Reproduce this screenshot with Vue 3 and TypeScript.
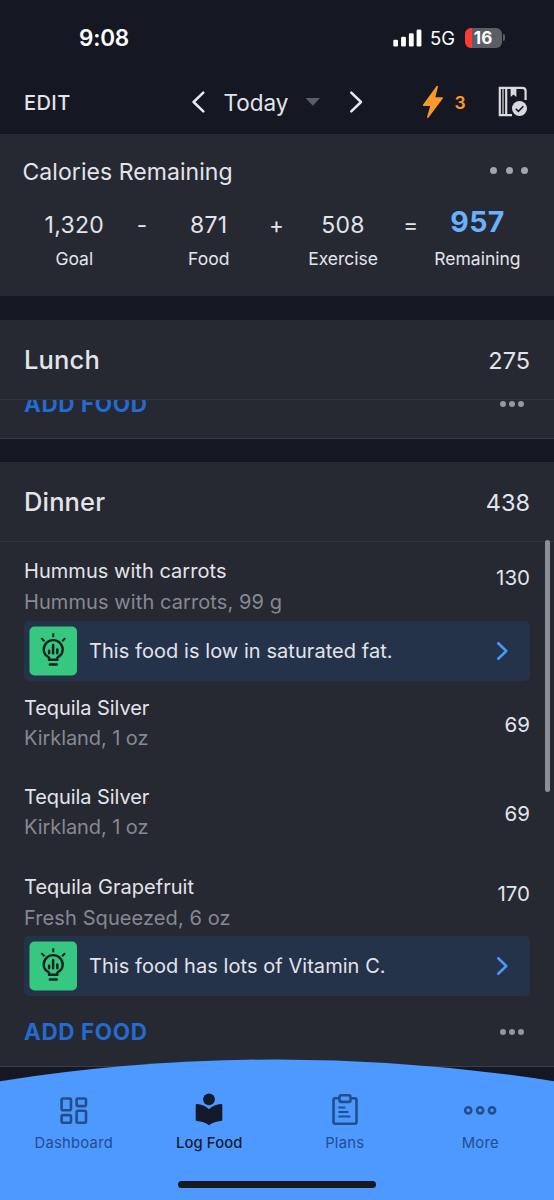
<script setup lang="ts">
interface Food {
  name: string
  detail: string
  calories: number
  tip?: string
}

interface Term {
  value: string
  label: string
  operator?: string
  total?: boolean
}

const terms: Term[] = [
  { value: '1,320', label: 'Goal', operator: '-' },
  { value: '871', label: 'Food', operator: '+' },
  { value: '508', label: 'Exercise', operator: '=' },
  { value: '957', label: 'Remaining', total: true },
]

const foods: Food[] = [
  {
    name: 'Hummus with carrots',
    detail: 'Hummus with carrots, 99 g',
    calories: 130,
    tip: 'This food is low in saturated fat.',
  },
  { name: 'Tequila Silver', detail: 'Kirkland, 1 oz', calories: 69 },
  { name: 'Tequila Silver', detail: 'Kirkland, 1 oz', calories: 69 },
  {
    name: 'Tequila Grapefruit',
    detail: 'Fresh Squeezed, 6 oz',
    calories: 170,
    tip: 'This food has lots of Vitamin C.',
  },
]
</script>

<template>
  <div class="screen">
    <header class="top">
      <div class="status">
        <span class="time">9:08</span>
        <div class="signals">
          <svg class="bars" width="29" height="18" viewBox="0 0 29 18">
            <rect x="0.3" y="10.8" width="4.7" height="6.8" rx="1.3" />
            <rect x="8.1" y="7.8" width="4.8" height="9.8" rx="1.3" />
            <rect x="15.9" y="4.2" width="4.8" height="13.4" rx="1.3" />
            <rect x="23.6" y="0.6" width="4.8" height="17" rx="1.3" />
          </svg>
          <span class="network">5G</span>
          <div class="battery"><span>16</span></div>
          <i class="battery-tip"></i>
        </div>
      </div>
      <nav class="bar">
        <span class="edit">EDIT</span>
        <svg class="chev" width="14" height="24" viewBox="0 0 14 24">
          <path d="M12.3 2.6 2.6 12l9.7 9.4" />
        </svg>
        <span class="today">Today</span>
        <svg class="caret" width="16" height="10" viewBox="0 0 16 10">
          <path d="M0.6 1h14.4L7.8 8.8z" />
        </svg>
        <svg class="chev next" width="14" height="24" viewBox="0 0 14 24">
          <path d="M2.3 2.6 12 12l-9.7 9.4" />
        </svg>
        <svg class="bolt" width="22" height="34" viewBox="0 0 22 34">
          <path d="M15.2 1.5 1.6 20.2h7.6L5.8 32.3 20.2 13.1h-7.8z" />
        </svg>
        <span class="streak">3</span>
        <svg class="book" width="30" height="32" viewBox="0 0 30 32">
          <path class="line" d="M14 29.2H1.8V1.8h22.5c2 0 3.3 1.3 3.3 3.3V14M8.2 1.8v27.4" />
          <path class="spine" d="M5 2v27" />
          <path class="fill" d="M12.6 1.8h5.8v9.200l-2.900-2.600-2.900 2.600z" />
          <circle class="fill" cx="21.500" cy="22.500" r="7.500" />
          <path class="check" d="m17.700 22.700 2.700 2.700 5-5.200" />
        </svg>
      </nav>
    </header>

    <section class="summary">
      <div class="summary-head">
        <h1>Calories Remaining</h1>
        <span class="dots wide"><i></i><i></i><i></i></span>
      </div>
      <div class="equation">
        <template v-for="term in terms" :key="term.label">
          <div class="term" :class="{ total: term.total }">
            <strong>{{ term.value }}</strong>
            <span>{{ term.label }}</span>
          </div>
          <div v-if="term.operator" class="operator">{{ term.operator }}</div>
        </template>
      </div>
    </section>

    <main>
      <section class="meal">
        <div class="meal-head">
          <h2>Lunch</h2>
          <span>275</span>
        </div>
        <div class="scrolled">
          <div class="add">
            <span>ADD FOOD</span>
            <span class="dots"><i></i><i></i><i></i></span>
          </div>
        </div>
      </section>

      <section class="meal">
        <div class="meal-head">
          <h2>Dinner</h2>
          <span>438</span>
        </div>
        <div class="foods">
          <article v-for="(food, i) in foods" :key="i" class="food" :class="{ tipped: food.tip }">
            <div class="row">
              <div>
                <p class="name">{{ food.name }}</p>
                <p class="detail">{{ food.detail }}</p>
              </div>
              <span class="calories">{{ food.calories }}</span>
            </div>
            <div v-if="food.tip" class="tip">
              <svg class="bulb" width="48" height="50" viewBox="0 0 48 50">
                <rect x="0.500" y="0.500" width="47.500" height="49" rx="5" />
                <path d="M20 33.800v-2.300c-3-1.500-5.300-4.300-5.300-7.900a9.500 9.500 0 0 1 19 0c0 3.600-2.300 6.400-5.300 7.900v2.300z" />
                <path class="thick" d="M20.900 38.500h6.800" />
                <path class="ray" d="M24.300 7.200v4M12.400 12.100l3 3.200M36.200 12.100l-3 3.200" />
                <path class="chart" d="M20.100 24.700v2.500M24.100 19v8.200M28.300 23.500v3.700" />
              </svg>
              <span>{{ food.tip }}</span>
              <svg class="go" width="13" height="20" viewBox="0 0 13 20">
                <path d="M2.200 2.300 10.300 10l-8.100 7.700" />
              </svg>
            </div>
          </article>
        </div>
        <div class="add">
          <span>ADD FOOD</span>
          <span class="dots"><i></i><i></i><i></i></span>
        </div>
      </section>
    </main>

    <i class="scrollbar"></i>

    <footer class="tabs">
      <svg class="arc" width="554" height="141" viewBox="0 0 554 141">
        <path d="M0 22.200Q277-21.200 554 22.200V141H0z" />
      </svg>
      <div class="tab-row">
        <div class="tab">
          <svg width="36" height="36" viewBox="0 0 36 36">
            <rect x="5.600" y="5.500" width="9.400" height="11.800" rx="1.500" />
            <rect x="20.600" y="5.500" width="9.400" height="7.600" rx="1.500" />
            <rect x="5.600" y="22.100" width="9.400" height="7.600" rx="1.500" />
            <rect x="20.600" y="17.700" width="9.400" height="12" rx="1.500" />
          </svg>
          <span>Dashboard</span>
        </div>
        <div class="tab active">
          <svg width="36" height="36" viewBox="0 0 36 36">
            <circle cx="18" cy="6.300" r="5.900" />
            <path d="M18 16.200C14.600 13 10.300 11.300 6 11.100c-.8 0-1.300.5-1.300 1.200v14.400c0 .7.500 1.200 1.200 1.300 4.500.3 8.700 1.700 12.100 4.300 3.400-2.600 7.600-4 12.100-4.300.7-.1 1.200-.6 1.200-1.300V12.300c0-.7-.5-1.200-1.300-1.200-4.300.2-8.600 1.900-12 5.100z" />
          </svg>
          <span>Log Food</span>
        </div>
        <div class="tab">
          <svg width="36" height="36" viewBox="0 0 36 36">
            <path d="M12.500 5.200H8.200c-1 0-1.700.7-1.700 1.700v22.200c0 1 .7 1.700 1.700 1.700h19.600c1 0 1.700-.7 1.700-1.700V6.900c0-1-.7-1.700-1.700-1.700h-4.300" />
            <rect x="12.500" y="2.300" width="11" height="6.600" rx="1.600" />
            <path class="thin" d="M11.400 14.400h7M11.400 19h10M11.400 23.500h12" />
          </svg>
          <span>Plans</span>
        </div>
        <div class="tab">
          <svg width="36" height="36" viewBox="0 0 36 36">
            <circle cx="6.200" cy="17.300" r="3.100" />
            <circle cx="18.100" cy="17.300" r="3.100" />
            <circle cx="30" cy="17.300" r="3.100" />
          </svg>
          <span>More</span>
        </div>
      </div>
      <i class="home"></i>
    </footer>
  </div>
</template>

<style>
body {
  margin: 0;
  background: #151722;
}
</style>

<style scoped>
.screen {
  position: relative;
  width: 554px;
  height: 1200px;
  overflow: hidden;
  background: #151722;
  color: #e3e4ea;
  font-family: Inter, "Liberation Sans", sans-serif;
  white-space: nowrap;
}
h1, h2, p {
  margin: 0;
  font-weight: 400;
}
svg {
  display: block;
  flex: none;
  fill: none;
}
.top {
  box-sizing: border-box;
  height: 134px;
}
.status {
  display: flex;
  align-items: center;
  justify-content: space-between;
  height: 75px;
  padding: 0 49px 0 79px;
  color: #fff;
}
.time {
  font-size: 22.5px;
  font-weight: 600;
  line-height: 30px;
  letter-spacing: -0.2px;
}
.signals {
  display: flex;
  align-items: center;
}
.bars {
  fill: #fff;
}
.network {
  width: 34.5px;
  margin-left: 8.5px;
  font-size: 18.5px;
  line-height: 24px;
  padding-top: 1px;
}
.battery {
  width: 37px;
  height: 20px;
  border-radius: 6px;
  background: linear-gradient(90deg, #fb3b35 0 6.7px, #5c5e65 6.7px);
  font-size: 17px;
  font-weight: 700;
  line-height: 20px;
  text-align: center;
}
.battery-tip {
  width: 2px;
  height: 7px;
  margin-left: 1.5px;
  border-radius: 0 2px 2px 0;
  background: #5c5e65;
}
.bar {
  display: flex;
  align-items: center;
  height: 54px;
  padding-left: 24px;
}
.edit {
  width: 167px;
  padding-top: 2px;
  font-size: 20px;
  font-weight: 500;
  letter-spacing: 0.4px;
}
.chev {
  stroke: #e8e9ee;
  stroke-width: 2.5;
  stroke-linecap: round;
  stroke-linejoin: round;
}
.today {
  width: 81px;
  margin-left: 18.5px;
  font-size: 22.5px;
}
.caret {
  fill: #5c5e63;
}
.next {
  margin-left: 28px;
}
.bolt {
  margin-left: 59.5px;
  fill: #f8992a;
  stroke: #f8992a;
  stroke-width: 1.5;
  stroke-linejoin: round;
}
.streak {
  width: 43.5px;
  margin-left: 10.5px;
  color: #f8992a;
  font-size: 17.5px;
  font-weight: 600;
}
.book .line {
  stroke: #d9dade;
  stroke-width: 2.2;
}
.book .spine {
  stroke: #d9dade;
  stroke-width: 1.2;
}
.book .fill {
  fill: #d9dade;
}
.book .check {
  stroke: #151722;
  stroke-width: 1.6;
}
.summary {
  box-sizing: border-box;
  height: 162px;
  padding: 22px 22px 0;
  background: #262832;
}
.summary-head {
  display: flex;
  justify-content: space-between;
  height: 32px;
  padding: 0 4px 0 0.5px;
}
h1 {
  font-size: 23px;
  line-height: 32px;
  letter-spacing: 0.06px;
}
.dots {
  display: flex;
  align-items: center;
  gap: 3px;
}
.dots i {
  width: 6px;
  height: 6px;
  border-radius: 50%;
  background: #9496a0;
}
.wide {
  gap: 8.5px;
  height: 28px;
}
.wide i {
  width: 7px;
  height: 7px;
  background: #a3a4ad;
}
.equation {
  display: grid;
  grid-template-columns: 104px 30.4px 104px 30.4px 104px 30.4px 104px;
  margin-top: 22px;
  padding-left: 0.3px;
  text-align: center;
}
.term strong {
  display: block;
  font-size: 23px;
  font-weight: 400;
  line-height: 30px;
  letter-spacing: 0.3px;
}
.term span {
  display: block;
  margin-top: 5px;
  font-size: 17.5px;
  line-height: 28px;
}
.term.total strong {
  margin-top: -3.5px;
  margin-bottom: 8.5px;
  color: #69b0fd;
  font-size: 28.5px;
  font-weight: 700;
}
.operator {
  padding-left: 1px;
  font-size: 22.5px;
  line-height: 30px;
}
.meal {
  margin-top: 24px;
  border-bottom: 1px solid #3b3d47;
  background: #262832;
}
.meal + .meal {
  margin-top: 23px;
}
.meal-head {
  display: flex;
  align-items: center;
  justify-content: space-between;
  height: 79px;
  padding: 0 24px;
  border-bottom: 1px solid #31333d;
  font-size: 23.5px;
}
.meal-head span {
  padding-top: 1px;
}
h2 {
  font-size: 25.5px;
  font-weight: 500;
  letter-spacing: 0.15px;
}
.scrolled {
  display: flex;
  flex-direction: column;
  justify-content: flex-end;
  height: 38px;
  overflow: hidden;
}
.add {
  display: flex;
  flex: none;
  align-items: center;
  justify-content: space-between;
  height: 70px;
  padding: 0 30px 0 24px;
  color: #246bcf;
  font-size: 22.5px;
  font-weight: 700;
  letter-spacing: 0.6px;
}
.add .dots {
  padding-top: 1px;
}
.foods {
  padding-top: 14px;
}
.food {
  height: 59px;
  padding: 0 24px 30px;
}
.food.tipped {
  height: 125px;
  padding-bottom: 12px;
}
.food.tipped:last-child {
  padding-bottom: 0;
}
.row {
  display: flex;
  justify-content: space-between;
  height: 65px;
}
.name,
.detail {
  font-size: 20px;
  line-height: 30px;
  letter-spacing: -0.07px;
}
.tipped .name {
  letter-spacing: 0.04px;
}
.tipped .detail {
  letter-spacing: 0.09px;
}
.detail {
  color: #878992;
}
.tipped .name,
.tipped .detail {
  line-height: 31px;
}
.tipped:last-child .name {
  padding-top: 1px;
}
.calories {
  margin-top: 17px;
  font-size: 20.5px;
  line-height: 30px;
}
.tipped .calories {
  margin-top: 7px;
}
.tipped:last-child .calories {
  margin-top: 8px;
}
.tip {
  display: flex;
  align-items: center;
  box-sizing: border-box;
  height: 60px;
  padding: 0 21px 0 5px;
  border-radius: 5px;
  background: #24324a;
  font-size: 20px;
  letter-spacing: 0.06px;
}
.tip span {
  flex: 1;
  padding-left: 12px;
}
.bulb {
  stroke: #10201f;
  stroke-width: 2.4;
  stroke-linejoin: round;
}
.bulb rect {
  fill: #36c780;
  stroke: none;
}
.bulb .ray {
  stroke-width: 2;
}
.bulb .thick,
.bulb .chart {
  stroke-width: 2.5;
  stroke-linecap: round;
}
.go {
  stroke: #4a97fb;
  stroke-width: 2.6;
  stroke-linecap: round;
  stroke-linejoin: round;
}
.scrollbar {
  position: absolute;
  top: 540px;
  right: 4px;
  width: 5px;
  height: 252px;
  border-radius: 3px;
  background: #8e8f96;
}
.tabs {
  position: absolute;
  bottom: 0;
  left: 0;
  width: 554px;
  height: 141px;
}
.arc {
  position: absolute;
  top: 0;
  left: 0;
  fill: #4e99ff;
}
.tab-row {
  position: relative;
  display: flex;
  padding: 34px 6px 0;
}
.tab {
  display: flex;
  flex: 1;
  flex-direction: column;
  align-items: center;
  color: #234e8c;
  font-size: 14.8px;
  letter-spacing: 0.25px;
}
.tab svg {
  stroke: #234e8c;
  stroke-width: 2.6;
}
.tab .thin {
  stroke-width: 2;
}
.tab.active {
  color: #131a2b;
  letter-spacing: 0.1px;
}
.tab.active svg {
  stroke: none;
  fill: #131a2b;
}
.tab span {
  margin-top: 4px;
  line-height: 20px;
}
.active span {
  font-weight: 500;
}
.home {
  position: absolute;
  bottom: 12px;
  left: 178px;
  width: 198px;
  height: 7px;
  border-radius: 4px;
  background: #171b20;
}
</style>
